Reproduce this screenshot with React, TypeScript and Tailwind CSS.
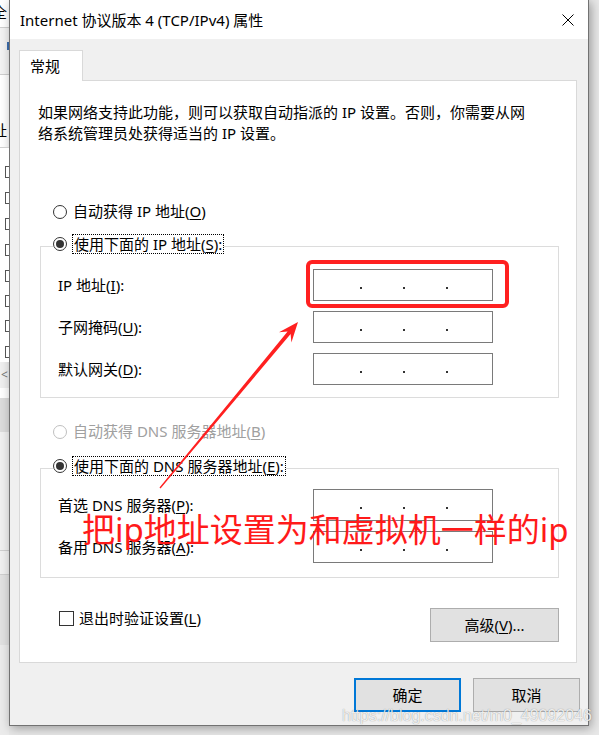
import React from "react";

// one accelerator letter, underlined like a Win32 dialog label
function Key({ k }: { k: string }) {
  return <span className="underline underline-offset-[2px] decoration-1">{k}</span>;
}

function Radio({ checked = false, disabled = false }: { checked?: boolean; disabled?: boolean }) {
  return (
    <span
      className={`w-[14px] h-[14px] rounded-full border bg-white flex items-center justify-center shrink-0 ${
        disabled ? "border-[#bfbfbf]" : "border-[#333333]"
      }`}
    >
      {checked && <span className="w-[8px] h-[8px] rounded-full bg-[#333333]" />}
    </span>
  );
}

function IpField() {
  return (
    <div className="w-[180px] h-[32px] border border-[#7a7a7a] bg-white flex items-center pl-[46px] pt-[5px] gap-[41px]">
      <span className="w-[2px] h-[2px] bg-[#333]" />
      <span className="w-[2px] h-[2px] bg-[#333]" />
      <span className="w-[2px] h-[2px] bg-[#333]" />
    </div>
  );
}

function FieldRow({ label }: { label: React.ReactNode }) {
  return (
    <div className="flex items-center h-[32px]">
      <div className="w-[255px] leading-[21px] whitespace-nowrap">{label}</div>
      <IpField />
    </div>
  );
}

function Legend({ children }: { children: React.ReactNode }) {
  return (
    <legend className="-ml-[5px] pb-[4px]">
      <div className="flex items-center h-[20px]">
        <Radio checked />
        <span className="ml-[5px] border border-dotted border-black px-[1px] leading-[18px] whitespace-nowrap">
          {children}
        </span>
      </div>
    </legend>
  );
}

// strip of the window that sits behind the dialog
function BackWindow() {
  const boxes = [166, 192, 218, 244, 270, 295, 320, 346];
  return (
    <div className="w-[9px] h-full shrink-0 overflow-hidden flex flex-col bg-white">
      <div className="h-[27px] bg-white overflow-hidden">
        <span className="block -ml-[8px] mt-[2px] text-[15px] leading-[20px]">全</span>
      </div>
      <div className="h-[48px] border-t border-b border-[#cfcfcf] bg-[#f3f3f3] pt-[14px]">
        <div className="ml-[7px] w-[2px] h-[8px] bg-[#3d6fb0]" />
      </div>
      <div className="h-[72px] bg-white overflow-hidden pt-[45px]">
        <span className="block -ml-[8px] text-[15px] leading-[20px]">址</span>
      </div>
      <div className="relative h-[215px] border-t border-[#cfcfcf] bg-white">
        {boxes.map((y, i) => (
          <div
            key={i}
            className="absolute left-[5px] w-[10px] h-[12px] border border-[#555] bg-white"
            style={{ top: y - 148 }}
          />
        ))}
      </div>
      <div className="h-[26px] bg-[#f0f0f0] text-[#777] text-[12px] leading-[26px] pl-[1px]">&lt;</div>
      <div className="h-[10px] bg-white" />
      <div className="h-[34px] bg-[#dcdcdc]" />
      <div className="h-[118px] bg-[#f0f0f0] overflow-hidden pt-[10px]">
        <span className="block -ml-[8px] text-[14px] leading-[20px] text-[#555]">扌</span>
      </div>
      <div className="h-[25px] border-t border-b border-[#cfcfcf] bg-[#f0f0f0]" />
      <div className="h-[70px] bg-[#e1e1e1]" />
      <div className="flex-1 bg-[#ebebeb]" />
    </div>
  );
}

export default function App() {
  return (
    <div className="relative w-[599px] h-[735px] overflow-hidden bg-[#e8e8e8] flex items-start text-[15px] text-black font-['Noto_Sans','Noto_Sans_CJK_SC',sans-serif]">
      <BackWindow />

      {/* dialog window */}
      <div className="w-[580px] h-[726px] shrink-0 border-l border-r border-b border-[#727272] bg-[#f0f0f0] flex flex-col shadow-[2px_2px_10px_rgba(0,0,0,0.35)]">
        <div className="h-[39px] bg-white flex items-center justify-between pl-[10px] pr-[14px]">
          <span className="leading-[20px] whitespace-nowrap">Internet 协议版本 4 (TCP/IPv4) 属性</span>
          <svg width="12" height="12" viewBox="0 0 12 12">
            <path d="M0.5 0.5 L11.5 11.5 M11.5 0.5 L0.5 11.5" stroke="#000" strokeWidth="1" fill="none" />
          </svg>
        </div>

        <div className="pt-[11px] pl-[9px] pr-[11px]">
          <div className="relative z-10 -mb-px w-[64px] h-[31px] border border-b-0 border-[#d9d9d9] bg-white flex items-center pl-[10px]">
            常规
          </div>
          <div className="h-[583px] border border-[#d9d9d9] bg-white flex flex-col pl-[20px]">
            <p className="pt-[21px] -ml-[2px] leading-[21px] whitespace-nowrap">
              如果网络支持此功能，则可以获取自动指派的 IP 设置。否则，你需要从网
              <br />
              络系统管理员处获得适当的 IP 设置。
            </p>

            <div className="mt-[57px] ml-[13px] h-[21px] flex items-center">
              <Radio />
              <span className="ml-[6px] leading-[21px]">
                自动获得 IP 地址(<Key k="O" />)
              </span>
            </div>

            <fieldset className="mt-[12px] w-[519px] border border-[#dcdcdc] pl-[17px] pt-[11px] pb-[12px]">
              <Legend>
                使用下面的 IP 地址(<Key k="S" />):
              </Legend>
              <div className="flex flex-col gap-[10px]">
                <FieldRow label={<>IP 地址(<Key k="I" />):</>} />
                <FieldRow label={<>子网掩码(<Key k="U" />):</>} />
                <FieldRow label={<>默认网关(<Key k="D" />):</>} />
              </div>
            </fieldset>

            <div className="mt-[23px] ml-[13px] h-[21px] flex items-center text-[#a0a0a0]">
              <Radio disabled />
              <span className="ml-[6px] leading-[21px]">
                自动获得 DNS 服务器地址(<Key k="B" />)
              </span>
            </div>

            <fieldset className="mt-[14px] w-[519px] border border-[#dcdcdc] pl-[17px] pt-[9px] pb-[14px]">
              <Legend>
                使用下面的 DNS 服务器地址(<Key k="E" />):
              </Legend>
              <div className="flex flex-col gap-[10px]">
                <FieldRow label={<>首选 DNS 服务器(<Key k="P" />):</>} />
                <FieldRow label={<>备用 DNS 服务器(<Key k="A" />):</>} />
              </div>
            </fieldset>

            <div className="mt-[30px] w-[519px] flex items-start justify-between">
              <div className="ml-[19px] h-[21px] flex items-center">
                <span className="w-[15px] h-[15px] border border-[#333] bg-white shrink-0" />
                <span className="ml-[5px] leading-[21px]">
                  退出时验证设置(<Key k="L" />)
                </span>
              </div>
              <button className="w-[129px] h-[34px] border border-[#adadad] bg-[#e1e1e1] flex items-center justify-center">
                高级(<Key k="V" />)...
              </button>
            </div>
          </div>
        </div>

        <div className="mt-[15px] pr-[8px] flex justify-end gap-[12px]">
          <button className="w-[107px] h-[34px] border-2 border-[#0078d7] bg-[#e1e1e1] flex items-center justify-center">
            确定
          </button>
          <button className="w-[107px] h-[34px] border border-[#adadad] bg-[#e1e1e1] flex items-center justify-center">
            取消
          </button>
        </div>
      </div>

      {/* annotation drawn over the screenshot */}
      <div className="absolute left-[306px] top-[260px] w-[203px] h-[48px] border-[4px] border-[#ff2020] rounded-[6px]" />
      <svg className="absolute left-0 top-0 pointer-events-none" width="599" height="735" viewBox="0 0 599 735">
        <polygon
          points="159.5,487.6 287.6,331.5 279,332.3 298,322 291.4,342.5 290.6,334.1 160.5,488.4"
          fill="#ff2020"
        />
      </svg>
      <div className="absolute left-[82px] top-[512px] text-[33px] leading-[36px] text-[#ff1a1a] whitespace-nowrap">
        把ip地址设置为和虚拟机一样的ip
      </div>
      <div className="absolute left-[342px] top-[706px] text-[16px] leading-[20px] text-[rgba(255,255,255,0.85)] whitespace-nowrap font-['Liberation_Sans',sans-serif] [text-shadow:0_0_1px_rgba(0,0,0,0.45)]">
        https://blog.csdn.net/m0_49092046
      </div>
    </div>
  );
}
